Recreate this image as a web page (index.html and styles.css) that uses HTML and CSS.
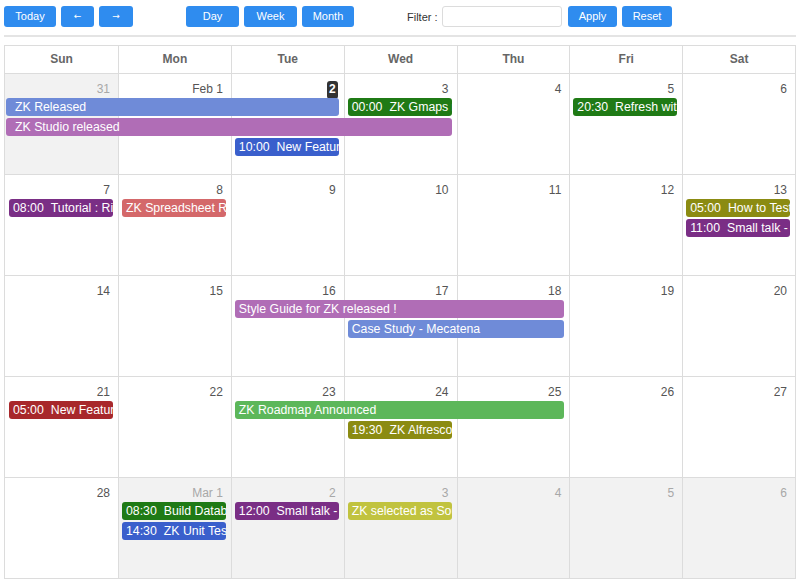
FILE: index.html
```html
<!DOCTYPE html>
<html>
<head>
<meta charset="utf-8">
<link rel="stylesheet" href="styles.css">
</head>
<body>
<div class="toolbar">
  <button class="btn w52">Today</button>
  <button class="btn w33 arrow">&larr;</button>
  <button class="btn w34 arrow">&rarr;</button>
  <button class="btn w53 grp">Day</button>
  <button class="btn w53">Week</button>
  <button class="btn w52">Month</button>
  <span class="flabel grp">Filter :</span>
  <input class="finput" type="text">
  <button class="btn w49">Apply</button>
  <button class="btn w50">Reset</button>
</div>
<div class="sep"></div>
<div class="cal">
  <div class="head">
    <div>Sun</div><div>Mon</div><div>Tue</div><div>Wed</div><div>Thu</div><div>Fri</div><div>Sat</div>
  </div>

  <div class="week">
    <div class="cell c1 other"><span class="num">31</span></div>
    <div class="cell c2"><span class="num">Feb 1</span></div>
    <div class="cell c3"><span class="num today">2</span></div>
    <div class="cell c4"><span class="num">3</span></div>
    <div class="cell c5"><span class="num">4</span></div>
    <div class="cell c6"><span class="num">5</span></div>
    <div class="cell c7"><span class="num">6</span></div>
    <div class="ev cont periwinkle" style="grid-column:1 / span 3;grid-row:2">ZK Released</div>
    <div class="ev green" style="grid-column:4;grid-row:2"><span class="t">00:00</span>ZK Gmaps released</div>
    <div class="ev green" style="grid-column:6;grid-row:2"><span class="t">20:30</span>Refresh with ZK</div>
    <div class="ev cont orchid" style="grid-column:1 / span 4;grid-row:3">ZK Studio released</div>
    <div class="ev blue" style="grid-column:3;grid-row:4"><span class="t">10:00</span>New Features</div>
  </div>

  <div class="week">
    <div class="cell c1"><span class="num">7</span></div>
    <div class="cell c2"><span class="num">8</span></div>
    <div class="cell c3"><span class="num">9</span></div>
    <div class="cell c4"><span class="num">10</span></div>
    <div class="cell c5"><span class="num">11</span></div>
    <div class="cell c6"><span class="num">12</span></div>
    <div class="cell c7"><span class="num">13</span></div>
    <div class="ev purple" style="grid-column:1;grid-row:2"><span class="t">08:00</span>Tutorial : Rich UI</div>
    <div class="ev salmon" style="grid-column:2;grid-row:2">ZK Spreadsheet Released</div>
    <div class="ev olive" style="grid-column:7;grid-row:2"><span class="t">05:00</span>How to Test ZK</div>
    <div class="ev purple" style="grid-column:7;grid-row:3"><span class="t">11:00</span>Small talk - ZK</div>
  </div>

  <div class="week">
    <div class="cell c1"><span class="num">14</span></div>
    <div class="cell c2"><span class="num">15</span></div>
    <div class="cell c3"><span class="num">16</span></div>
    <div class="cell c4"><span class="num">17</span></div>
    <div class="cell c5"><span class="num">18</span></div>
    <div class="cell c6"><span class="num">19</span></div>
    <div class="cell c7"><span class="num">20</span></div>
    <div class="ev orchid" style="grid-column:3 / span 3;grid-row:2">Style Guide for ZK released !</div>
    <div class="ev periwinkle" style="grid-column:4 / span 2;grid-row:3">Case Study - Mecatena</div>
  </div>

  <div class="week">
    <div class="cell c1"><span class="num">21</span></div>
    <div class="cell c2"><span class="num">22</span></div>
    <div class="cell c3"><span class="num">23</span></div>
    <div class="cell c4"><span class="num">24</span></div>
    <div class="cell c5"><span class="num">25</span></div>
    <div class="cell c6"><span class="num">26</span></div>
    <div class="cell c7"><span class="num">27</span></div>
    <div class="ev red" style="grid-column:1;grid-row:2"><span class="t">05:00</span>New Features</div>
    <div class="ev lime" style="grid-column:3 / span 3;grid-row:2">ZK Roadmap Announced</div>
    <div class="ev olive" style="grid-column:4;grid-row:3"><span class="t">19:30</span>ZK Alfresco</div>
  </div>

  <div class="week">
    <div class="cell c1"><span class="num">28</span></div>
    <div class="cell c2 other"><span class="num">Mar 1</span></div>
    <div class="cell c3 other"><span class="num">2</span></div>
    <div class="cell c4 other"><span class="num">3</span></div>
    <div class="cell c5 other"><span class="num">4</span></div>
    <div class="cell c6 other"><span class="num">5</span></div>
    <div class="cell c7 other"><span class="num">6</span></div>
    <div class="ev green" style="grid-column:2;grid-row:2"><span class="t">08:30</span>Build Database</div>
    <div class="ev blue" style="grid-column:2;grid-row:3"><span class="t">14:30</span>ZK Unit Test</div>
    <div class="ev purple" style="grid-column:3;grid-row:2"><span class="t">12:00</span>Small talk - ZK</div>
    <div class="ev yellow" style="grid-column:4;grid-row:2">ZK selected as SourceForge</div>
  </div>
</div>
</body>
</html>
```
FILE: styles.css
```css
* { box-sizing: border-box; }
html, body { margin: 0; padding: 0; background: #fff; }
body {
  font-family: "Liberation Sans", Arial, Helvetica, sans-serif;
  padding: 6px 4px 0 4px;
  width: 800px;
}
.toolbar {
  display: flex;
  align-items: center;
  gap: 5px;
  height: 21px;
}
.btn {
  height: 21px;
  border: none;
  border-radius: 3px;
  background: #2f8cef;
  color: #fff;
  font-family: "Liberation Sans", Arial, sans-serif;
  font-size: 11px;
  padding: 0;
  text-align: center;
  line-height: 21px;
}
.btn.arrow {
  font-family: "DejaVu Sans", sans-serif;
  font-size: 9px;
  line-height: 19px;
}
.w33 { width: 33px; }
.w34 { width: 34px; }
.w49 { width: 49px; }
.w50 { width: 50px; }
.w52 { width: 52px; }
.w53 { width: 53px; }
.grp { margin-left: 48px; }
.flabel {
  font-size: 11px;
  color: #333;
  width: 30px;
  white-space: nowrap;
}
.finput {
  width: 120px;
  height: 21px;
  border: 1px solid #dcdcdc;
  border-radius: 3px;
  margin: 0 1px 0 0;
  padding: 0 4px;
}
.sep {
  height: 2px;
  background: #e4e4e4;
  margin-top: 8px;
  width: 792px;
}
.cal {
  margin-top: 8px;
  width: 792px;
  border: 1px solid #dcdcdc;
  border-bottom: none;
}
.head {
  display: grid;
  grid-template-columns: 113px repeat(6, 1fr);
  height: 28px;
  border-bottom: 1px solid #dcdcdc;
}
.head div {
  border-left: 1px solid #dcdcdc;
  text-align: center;
  font-weight: bold;
  font-size: 12px;
  color: #666;
  line-height: 27px;
}
.head div:first-child { border-left: none; }
.week {
  display: grid;
  grid-template-columns: 113px repeat(6, 1fr);
  grid-template-rows: 24px 20px 20px 20px 1fr;
  height: 101px;
  border-bottom: 1px solid #dcdcdc;
}
.cell {
  grid-row: 1 / -1;
  border-left: 1px solid #dcdcdc;
  text-align: right;
  padding: 5px 8px 0 0;
  background: #fff;
}
.c1 { grid-column: 1; border-left: none; }
.c2 { grid-column: 2; }
.c3 { grid-column: 3; }
.c4 { grid-column: 4; }
.c5 { grid-column: 5; }
.c6 { grid-column: 6; }
.c7 { grid-column: 7; }
.cell.other { background: #f2f2f2; }
.num {
  display: inline-block;
  font-size: 12px;
  line-height: 15px;
  color: #555;
}
.other .num { color: #a8a8a8; }
.num.today {
  background: #333;
  color: #fff;
  font-weight: bold;
  border-radius: 3px;
  padding: 1px 2px 2px;
  margin: -3px -2px 0 0;
}
.ev {
  align-self: start;
  height: 18px;
  line-height: 18px;
  margin: 0 5px 0 4px;
  padding-left: 4px;
  border-radius: 3px;
  color: #fff;
  font-size: 12.3px;
  white-space: nowrap;
  overflow: hidden;
}
.ev.cont { margin-left: 1px; padding-left: 9px; }
.t { margin-right: 7px; }
.periwinkle { background: #6f8bd8; }
.orchid { background: #b06db6; }
.green { background: #1f7a15; }
.blue { background: #3a5fcc; }
.purple { background: #7a2e85; }
.salmon { background: #d4686a; }
.olive { background: #8b8b12; }
.red { background: #a8282b; }
.lime { background: #5db75a; }
.yellow { background: #c1c33f; }
```
